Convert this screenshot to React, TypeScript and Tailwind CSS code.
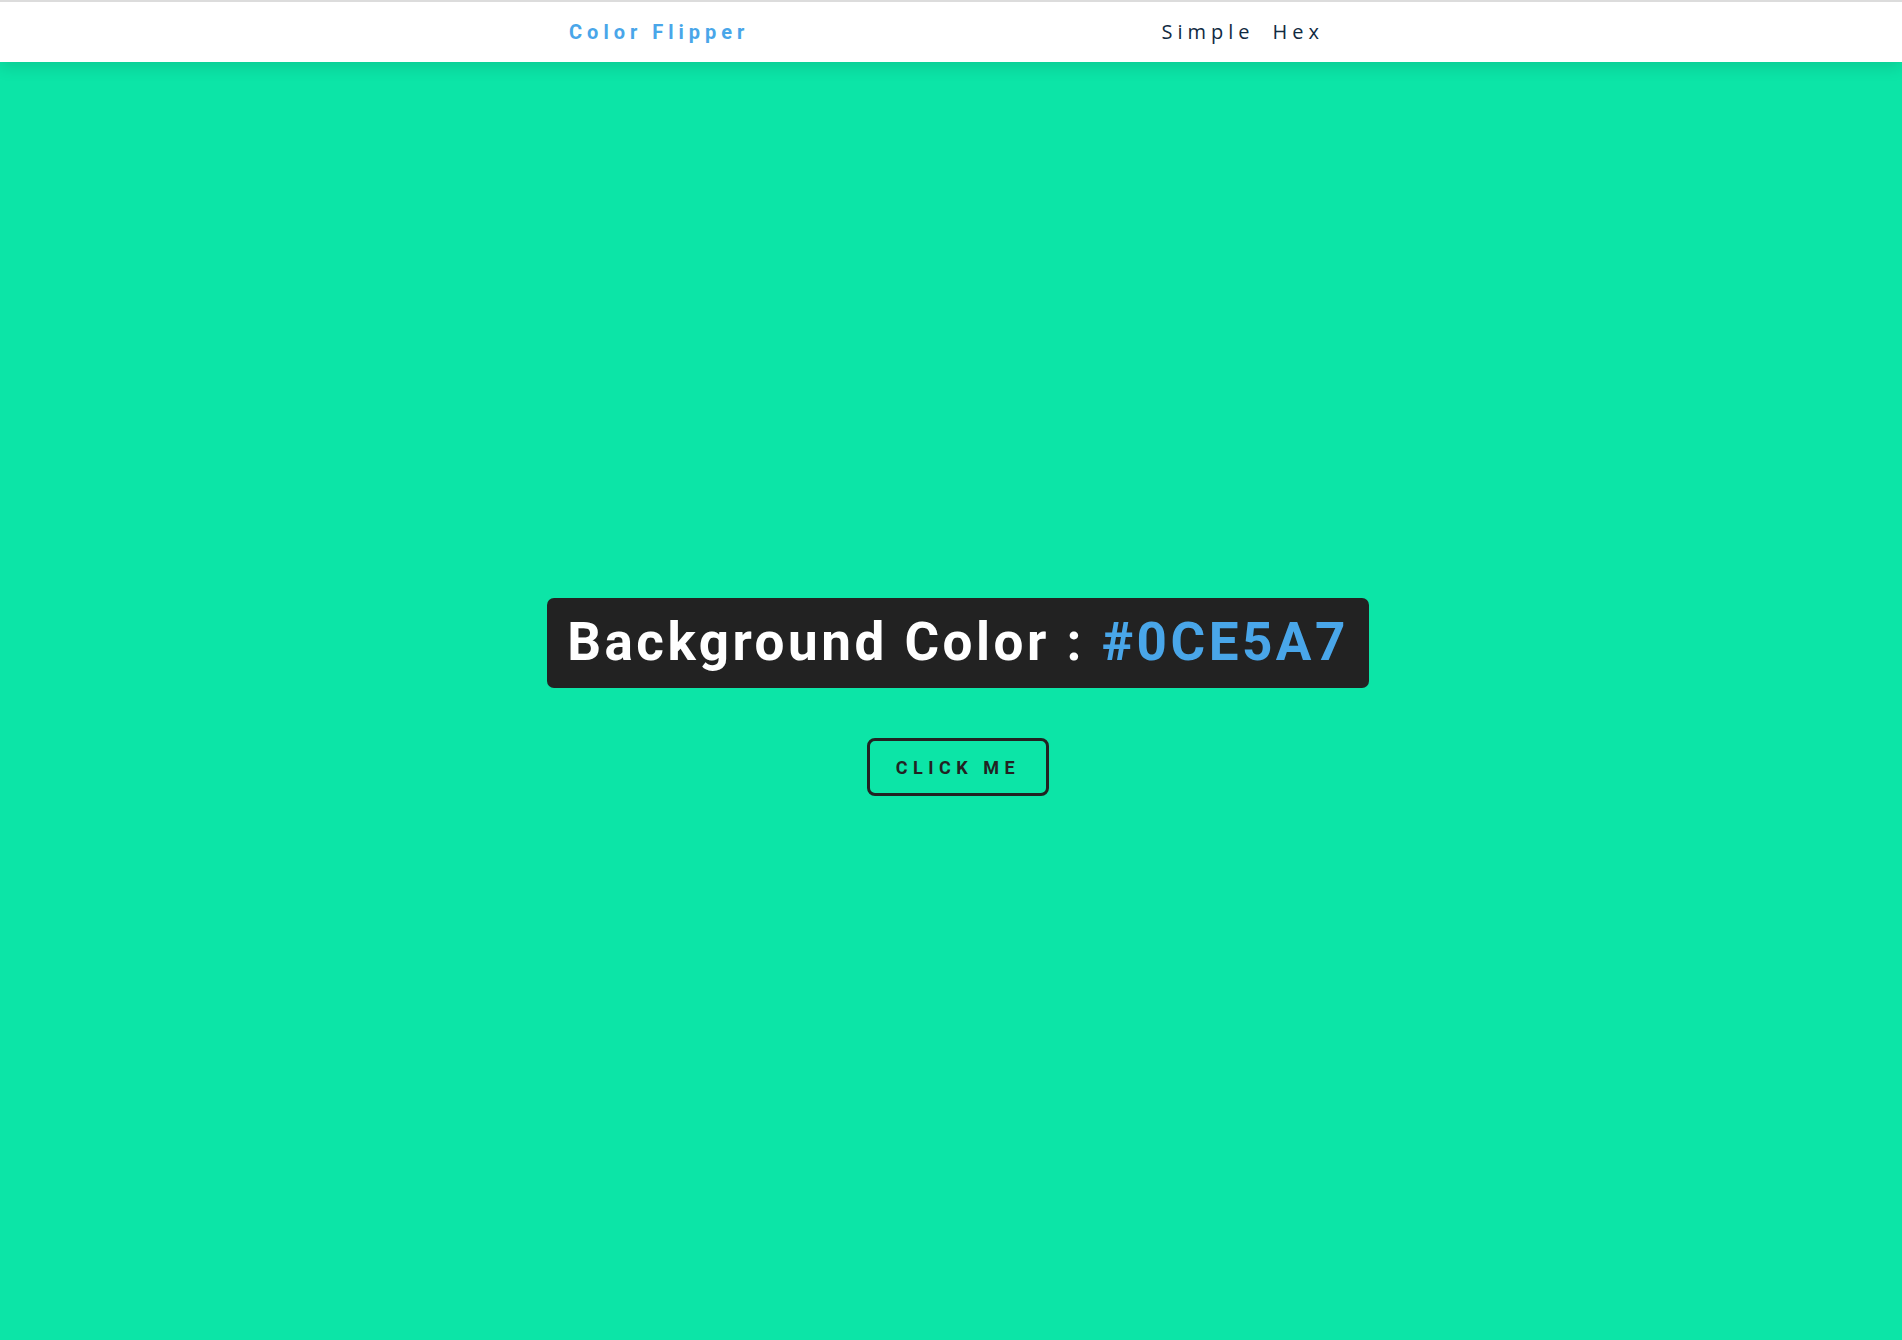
export default function App() {
  const hex = "#0CE5A7";

  return (
    <div className="min-h-screen flex flex-col bg-[#0CE5A7]">
      {/* Nav */}
      <nav className="relative z-10 h-[62px] bg-white border-t-2 border-[#dcdcdc] shadow-[0_5px_15px_rgba(0,0,0,0.12)]">
        <div className="mx-auto w-[764px] h-full flex items-center justify-between">
          <h4
            className="text-[20px] font-bold tracking-[5px] text-[#49a6e9]"
            style={{ fontFamily: "Roboto, sans-serif" }}
          >
            Color Flipper
          </h4>
          <ul
            className="flex gap-[18px] mr-[9px] text-[20px] font-medium tracking-[5px] text-[#102a42]"
            style={{ fontFamily: "'Open Sans', sans-serif" }}
          >
            <li>Simple</li>
            <li>Hex</li>
          </ul>
        </div>
      </nav>

      {/* Main */}
      <main
        className="flex-1 flex flex-col items-center justify-center pl-[14px] pb-[8px]"
        style={{ fontFamily: "Roboto, sans-serif" }}
      >
        <h2 className="bg-[#222222] rounded-[7px] px-[20px] h-[90px] flex items-center text-[53px] font-bold tracking-[3.5px] text-white">
          Background Color :&nbsp;<span className="text-[#49a6e9]">{hex}</span>
        </h2>
        <button className="mt-[50px] w-[182px] h-[58px] border-[3px] border-[#222222] rounded-[8px] text-[18px] font-bold tracking-[5.5px] text-[#222222] uppercase">
          Click me
        </button>
      </main>
    </div>
  );
}
